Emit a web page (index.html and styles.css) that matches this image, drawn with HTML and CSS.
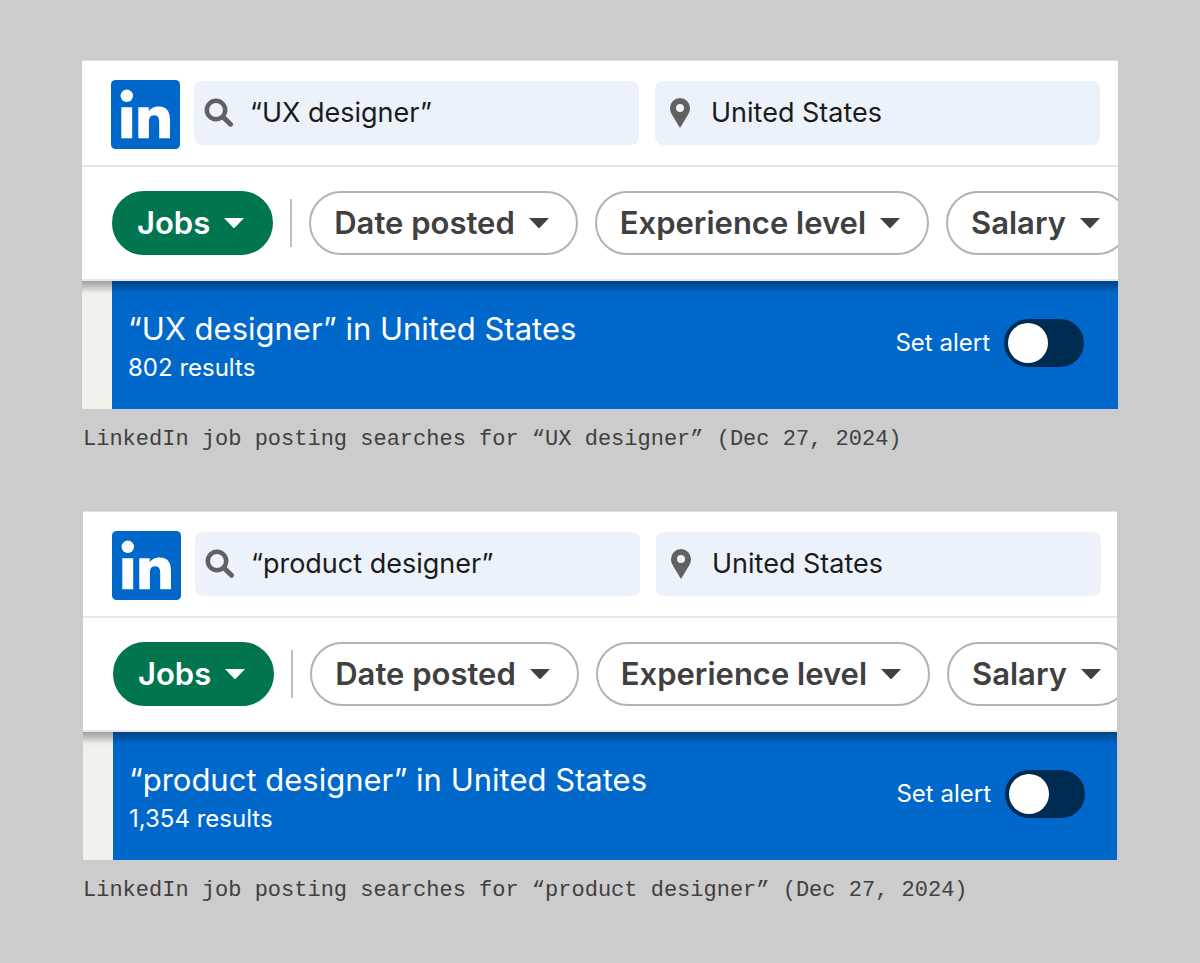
FILE: index.html
```
<!DOCTYPE html>
<html lang="en">
<head>
<meta charset="utf-8">
<meta name="viewport" content="width=device-width, initial-scale=1">
<title>LinkedIn job posting searches</title>
<link rel="stylesheet" href="styles.css">
</head>
<body>
<svg class="sprite" aria-hidden="true">
  <symbol id="logo" viewBox="0 0 69 69">
    <rect width="69" height="69" rx="4.500" fill="#0068cb"/>
    <circle cx="15.800" cy="15.800" r="6.200" fill="#fff"/>
    <path fill="#fff" d="M10.300 27.300h10.900v31H10.300zM27.300 27.300h10.400v4.300c1.500-2.800 5-5.100 9.800-5.100 9.200 0 11.500 6 11.500 14v17.800H48.200V42.500c0-4.200-.8-7.300-5.100-7.300s-5.200 3.200-5.200 7.300v15.800H27.300z"/>
  </symbol>
  <symbol id="search" viewBox="0 0 30 30">
    <circle cx="12" cy="12" r="9.200" fill="none" stroke="#5f6163" stroke-width="4.500"/>
    <path d="M19 19l7.500 7.200" fill="none" stroke="#5f6163" stroke-width="5" stroke-linecap="round"/>
  </symbol>
  <symbol id="pin" viewBox="0 0 20 30">
    <path fill="#5f6163" fill-rule="evenodd" d="M10 0a10 10 0 0 1 10 10c0 3-1 5-2.300 7.300L10 30 2.300 17.300C1 15 0 13 0 10A10 10 0 0 1 10 0zm0 6a4 4 0 1 0 0 8 4 4 0 0 0 0-8z"/>
  </symbol>
  <symbol id="caret" viewBox="0 0 20 10">
    <path fill="currentColor" d="M0 0h20l-9.300 9.700q-.7.500-1.400 0z"/>
  </symbol>
</svg>
<main class="page">
  <figure class="shot">
    <div class="card">
      <form class="topbar">
        <a class="logo" href="#" aria-label="LinkedIn"><svg><use href="#logo"/></svg></a>
        <label class="field"><span class="field-icon"><svg class="icon-search"><use href="#search"/></svg></span><input type="text" aria-label="Job title" value="“UX designer”"></label>
        <label class="field"><span class="field-icon"><svg class="icon-pin"><use href="#pin"/></svg></span><input type="text" aria-label="Location" value="United States"></label>
      </form>
      <div class="filters">
        <button class="pill pill-active" type="button">Jobs<svg><use href="#caret"/></svg></button>
        <span class="divider"></span>
        <button class="pill" type="button">Date posted<svg><use href="#caret"/></svg></button>
        <button class="pill" type="button">Experience level<svg><use href="#caret"/></svg></button>
        <button class="pill" type="button">Salary<svg><use href="#caret"/></svg></button>
      </div>
      <div class="results">
        <div class="summary">
          <h2>“UX designer” in United States</h2>
          <p>802 results</p>
        </div>
        <label class="alert">Set alert<input type="checkbox" role="switch"></label>
      </div>
    </div>
    <figcaption>LinkedIn job posting searches for “UX designer” (Dec 27, 2024)</figcaption>
  </figure>
  <figure class="shot">
    <div class="card card-inset">
      <form class="topbar">
        <a class="logo" href="#" aria-label="LinkedIn"><svg><use href="#logo"/></svg></a>
        <label class="field"><span class="field-icon"><svg class="icon-search"><use href="#search"/></svg></span><input type="text" aria-label="Job title" value="“product designer”"></label>
        <label class="field"><span class="field-icon"><svg class="icon-pin"><use href="#pin"/></svg></span><input type="text" aria-label="Location" value="United States"></label>
      </form>
      <div class="filters">
        <button class="pill pill-active" type="button">Jobs<svg><use href="#caret"/></svg></button>
        <span class="divider"></span>
        <button class="pill" type="button">Date posted<svg><use href="#caret"/></svg></button>
        <button class="pill" type="button">Experience level<svg><use href="#caret"/></svg></button>
        <button class="pill" type="button">Salary<svg><use href="#caret"/></svg></button>
      </div>
      <div class="results">
        <div class="summary">
          <h2>“product designer” in United States</h2>
          <p>1,354 results</p>
        </div>
        <label class="alert">Set alert<input type="checkbox" role="switch"></label>
      </div>
    </div>
    <figcaption>LinkedIn job posting searches for “product designer” (Dec 27, 2024)</figcaption>
  </figure>
</main>
</body>
</html>
```
FILE: styles.css
```
* {
  box-sizing: border-box;
}

body {
  margin: 0;
  background: #ccc;
  font-family: Inter, "Liberation Sans", sans-serif;
}

.sprite {
  display: none;
}

.page {
  display: flex;
  flex-direction: column;
  gap: 53px;
  padding: 60px 82px;
}

.shot {
  margin: 0;
}

.card {
  --edge: 18px;
  background: #fff;
  border-top: 1px solid #e0e0e0;
  overflow: hidden;
}

.card-inset {
  --edge: 16px;
  margin: 0 1px;
}

.topbar {
  display: flex;
  align-items: flex-start;
  gap: 16px;
  padding: 20px var(--edge) 20px 29px;
  border-bottom: 2px solid #e6e6e6;
}

.logo {
  display: block;
  margin: -1px -2px -4px 0;
}

.logo svg {
  display: block;
  width: 69px;
  height: 69px;
}

.field {
  display: flex;
  flex: 1;
  align-items: center;
  min-width: 0;
  height: 64px;
  border-radius: 8px;
  background: #ebf2f9;
}

.field-icon {
  display: flex;
  flex: none;
  justify-content: center;
  width: 50px;
}

.icon-search {
  width: 30px;
  height: 30px;
}

.icon-pin {
  width: 20px;
  height: 30px;
}

.field input {
  flex: 1;
  min-width: 0;
  padding: 0 6px;
  border: 0;
  background: none;
  color: #1b1b1c;
  font: 400 27px/36px Inter, "Liberation Sans", sans-serif;
}

.filters {
  display: flex;
  align-items: center;
  gap: 17px;
  padding: 24px 0 24px 30px;
  border-bottom: 2px solid #e8e8e6;
}

.pill {
  display: flex;
  flex: none;
  align-items: center;
  gap: 14px;
  height: 64px;
  padding: 0 27px 0 23px;
  border: 2px solid #b2b2b2;
  border-radius: 32px;
  background: #fff;
  color: #404040;
  font: 600 31px/40px Inter, "Liberation Sans", sans-serif;
  white-space: nowrap;
}

.pill svg {
  width: 20px;
  height: 10px;
}

.pill-active {
  border-color: #01754f;
  background: #01754f;
  color: #fff;
}

.divider {
  flex: none;
  width: 2px;
  height: 48px;
  background: #bfbfbf;
}

.results {
  display: flex;
  align-items: center;
  justify-content: space-between;
  height: 128px;
  padding: 0 calc(var(--edge) + 16px) 4px 16px;
  border-left: 30px solid #f3f1ec;
  background: #0068cb;
  color: #fff;
  position: relative;
}

.results::before {
  content: "";
  position: absolute;
  inset: 0 0 auto -30px;
  height: 14px;
  background: linear-gradient(rgba(0, 0, 0, 0.34), rgba(0, 0, 0, 0.2) 40%, rgba(0, 0, 0, 0.03) 80%, transparent);
}

.summary {
  padding-top: 10px;
}

.summary h2 {
  margin: 0;
  font-size: 31px;
  font-weight: 400;
  line-height: 40px;
}

.summary p {
  margin: 0;
  font-size: 24px;
  line-height: 38px;
}

.alert {
  display: flex;
  align-items: center;
  gap: 14px;
  font-size: 24px;
  line-height: 32px;
}

.alert input {
  appearance: none;
  display: flex;
  width: 80px;
  height: 48px;
  margin: 0;
  padding: 4px;
  border-radius: 24px;
  background: #002b50;
}

.alert input::before {
  content: "";
  width: 40px;
  height: 40px;
  border-radius: 50%;
  background: #fff;
}

.alert input:checked {
  justify-content: flex-end;
}

figcaption {
  margin-top: 13px;
  padding-left: 1px;
  color: #404040;
  font: 400 22px/36px "Liberation Mono", monospace;
}
```
